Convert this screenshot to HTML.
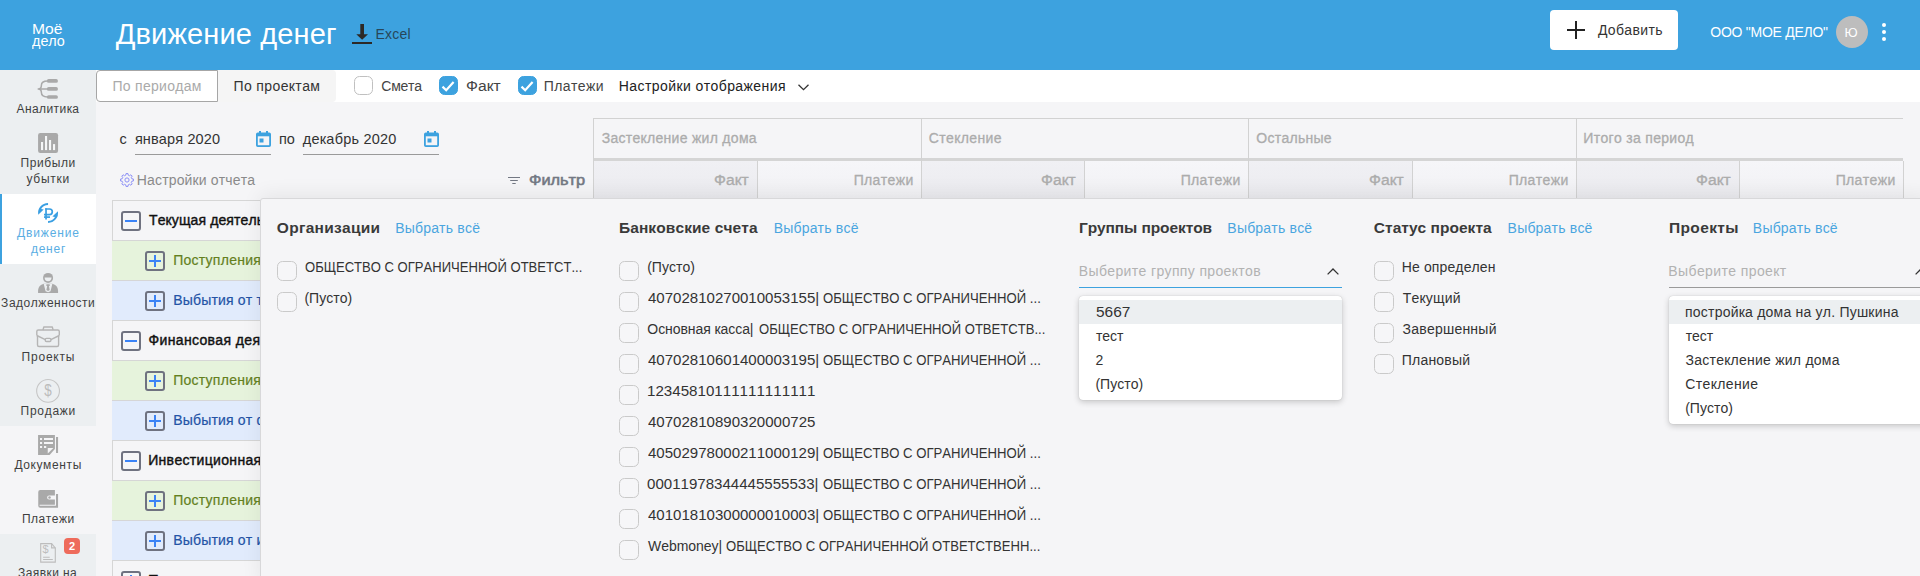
<!DOCTYPE html>
<html lang="ru">
<head>
<meta charset="utf-8">
<title>Движение денег</title>
<style>
*{box-sizing:border-box;margin:0;padding:0}
html,body{width:1920px;height:576px;overflow:hidden;background:#f5f5f7;font-family:"Liberation Sans",sans-serif;color:#212121}
body{position:relative}
.a{position:absolute}
.t{position:absolute;white-space:nowrap;line-height:1;font-kerning:none}
#hdr{left:0;top:0;width:1920px;height:70px;background:#3da2df}
#side{left:0;top:70px;width:96px;height:506px;background:#eceff1}
#bar{left:96px;top:70px;width:1824px;height:32px;background:#fff}
.cb{position:absolute;width:19px;height:19px;border:1.5px solid #c0c0c0;border-radius:5.5px;background:#fff}
.cb.on{background:#3da2df;border-color:#3da2df}
.cb2{position:absolute;width:19.6px;height:19.6px;border:1.5px solid #cacaca;border-radius:5.5px;background:#f6f6f8}
.row{position:absolute;left:112px;width:150px;height:40px;border-top:1px solid #d6d6d6}
.pm{position:absolute;width:20px;height:20px;border:2px solid #6f7280;border-radius:3px;background:transparent}
.pm:before{content:"";position:absolute;left:2px;top:7px;width:12px;height:2px;background:#3b83f6}
.pm.p:after{content:"";position:absolute;left:7px;top:2px;width:2px;height:12px;background:#3b83f6}
#panel{left:260px;top:198px;width:1670px;height:390px;background:#f5f5f7;border:1px solid #d8d8da;border-radius:3px;box-shadow:0 -3px 20px rgba(0,0,0,.07)}
.dd{position:absolute;background:#fff;border-radius:4px;box-shadow:0 2px 6px rgba(0,0,0,.2),0 0 1px rgba(0,0,0,.25)}
.hl{position:absolute;left:0;right:0;height:24px;background:#eceff1}
svg{position:absolute;overflow:visible}
</style>
</head>
<body>
<div id="hdr" class="a"></div>
<span class="t" style="left:32.42px;top:21px;font-size:14px;line-height:16px;color:#fff;transform:scaleX(1.1153);transform-origin:0 0;">Моё</span>
<span class="t" style="left:31.86px;top:32px;font-size:15px;line-height:17px;color:#fff;transform:scaleX(0.9573);transform-origin:0 0;">дело</span>
<span class="t" style="left:115.79px;top:18px;font-size:29px;line-height:32px;color:#fff;letter-spacing:0.139px;">Движение денег</span>
<svg style="left:352px;top:24px" width="20" height="20" viewBox="0 0 20 20"><path d="M8.300 0H12V10.300H16L10.150 15.800L4.300 10.300H8.300Z" fill="#2d2926"/><rect x="0" y="18" width="20" height="2" fill="#2d2926"/></svg>
<span class="t" style="left:375.55px;top:26px;font-size:14px;line-height:16px;color:#27475a;letter-spacing:0.213px;">Excel</span>
<div class="a" style="left:1550px;top:10px;width:128px;height:40px;background:#fff;border-radius:4px"></div>
<div class="a" style="left:1567px;top:29px;width:18px;height:2px;background:#222"></div><div class="a" style="left:1575px;top:21px;width:2px;height:18px;background:#222"></div>
<span class="t" style="left:1597.90px;top:22px;font-size:14px;line-height:16px;color:#333;letter-spacing:0.376px;">Добавить</span>
<span class="t" style="left:1710.34px;top:24px;font-size:14px;line-height:16px;color:#fff;letter-spacing:-0.264px;">ООО "МОЕ ДЕЛО"</span>
<div class="a" style="left:1836px;top:16px;width:32px;height:32px;border-radius:50%;background:#bdbdbd"></div>
<span class="t" style="left:1844.43px;top:25px;font-size:13px;line-height:15px;color:#fff;">Ю</span>
<div class="a" style="left:1882px;top:23px;width:4px;height:4px;border-radius:50%;background:#fff"></div>
<div class="a" style="left:1882px;top:30px;width:4px;height:4px;border-radius:50%;background:#fff"></div>
<div class="a" style="left:1882px;top:37px;width:4px;height:4px;border-radius:50%;background:#fff"></div>
<div id="side" class="a"></div>
<div class="a" style="left:0;top:194px;width:96px;height:70px;background:#fff;border-left:2px solid #3da2df"></div>
<div class="a" style="left:0;top:426px;width:96px;height:108px;background:#f5f5f7"></div>
<span class="t" style="left:16.48px;top:102px;font-size:12px;line-height:14px;color:#3f3f3f;letter-spacing:0.423px;">Аналитика</span>
<span class="t" style="left:20.53px;top:156px;font-size:12px;line-height:14px;color:#3f3f3f;letter-spacing:0.598px;">Прибыли</span>
<span class="t" style="left:26.47px;top:172px;font-size:12px;line-height:14px;color:#3f3f3f;letter-spacing:0.782px;">убытки</span>
<span class="t" style="left:16.91px;top:226px;font-size:12px;line-height:14px;color:#5aaee3;letter-spacing:0.886px;">Движение</span>
<span class="t" style="left:30.88px;top:242px;font-size:12px;line-height:14px;color:#5aaee3;letter-spacing:0.777px;">денег</span>
<span class="t" style="left:1.11px;top:296px;font-size:12px;line-height:14px;color:#3f3f3f;letter-spacing:0.524px;">Задолженности</span>
<span class="t" style="left:21.53px;top:350px;font-size:12px;line-height:14px;color:#3f3f3f;letter-spacing:0.796px;">Проекты</span>
<span class="t" style="left:20.53px;top:404px;font-size:12px;line-height:14px;color:#3f3f3f;letter-spacing:0.736px;">Продажи</span>
<span class="t" style="left:14.41px;top:458px;font-size:12px;line-height:14px;color:#3f3f3f;letter-spacing:0.648px;">Документы</span>
<span class="t" style="left:21.93px;top:512px;font-size:12px;line-height:14px;color:#3f3f3f;letter-spacing:0.517px;">Платежи</span>
<span class="t" style="left:18.11px;top:566px;font-size:12px;line-height:14px;color:#3f3f3f;letter-spacing:0.413px;">Заявки на</span>
<svg style="left:0;top:0" width="96" height="576" viewBox="0 0 96 576">
<!-- analytics -->
<g stroke="#a9a9a9" fill="none" stroke-linecap="round">
<path d="M48.7 80.900H56.100M48.700 88.900H56.100M48.700 97H56.100" stroke-width="3.700"/>
<path d="M47.500 80.900C43.300 80.900 41.400 82.600 41.400 85.200C41.400 87.600 40.200 88.900 38.200 88.900C40.200 88.900 41.400 90.200 41.400 92.600C41.400 95.200 43.300 97 47.500 97M38.200 88.900H48" stroke-width="1.500"/>
</g>
<!-- profit/loss -->
<rect x="38.060" y="133" width="20" height="20" rx="2.200" fill="#a9a9a9"/>
<g fill="#f6f7f8"><rect x="41" y="142" width="2.100" height="8.100"/><rect x="45" y="136" width="2.100" height="14.100"/><rect x="49" y="140" width="2.100" height="10.100"/><rect x="53" y="144.100" width="2.100" height="6"/></g>
<!-- money flow -->
<g fill="none" stroke="#3a9fe2">
<path d="M46.030 208.200V219.600" stroke-width="1.700"/>
<path d="M45.200 209H49.500A2.800 2.800 0 0 1 49.500 214.600H44" stroke-width="1.700"/>
<path d="M44 217.100H50" stroke-width="1.700"/>
</g>
<path d="M48.060 202.900A10 10 0 0 0 38.210 214.640L43.700 209.400L41.130 208.900A8 8 0 0 1 48.060 204.900Z" fill="#3a9fe2"/>
<path d="M48.060 222.900A10 10 0 0 0 57.910 211.160L52.420 216.400L54.990 216.900A8 8 0 0 1 48.060 220.900Z" fill="#3a9fe2"/>
<!-- debts -->
<circle cx="48.060" cy="277.900" r="5" fill="#a9a9a9"/>
<path d="M44.600 277.500A3.460 3.700 0 0 0 51.520 277.500Z" fill="#eceff1"/>
<path d="M38.060 292.900V291C38.060 286.200 41.800 283.800 45 283.800H51.100C54.300 283.800 58.060 286.200 58.060 291V292.900Z" fill="#a9a9a9"/>
<path d="M43.700 283.800H52.400L50.500 291.300L48.060 292.300L45.600 291.300Z" fill="#eceff1"/>
<path d="M46.400 284.300H49.700V285.900H48.900L49.700 289.900L48.060 291.100L46.400 289.900L47.200 285.900H46.400Z" fill="#a9a9a9"/>
<!-- projects -->
<g fill="none" stroke="#b5b5b5" stroke-width="1.400" stroke-linejoin="round">
<path d="M37.500 335.800V345a1.500 1.500 0 0 0 1.500 1.500H57.100a1.500 1.500 0 0 0 1.500-1.500V335.800"/>
<path d="M36.800 335.500V331.500a1.500 1.500 0 0 1 1.500-1.500H57.800a1.500 1.500 0 0 1 1.500 1.500V335.500"/>
<path d="M36.800 335.500L45.300 339.700M50.900 339.700L59.300 335.500"/>
<rect x="45.250" y="338.400" width="5.650" height="3.100" rx="1.200" fill="#eceff1"/>
<path d="M43 330L43.800 327H52.300L53.100 330"/>
</g>
<!-- sales -->
<circle cx="48.060" cy="390.900" r="11.400" fill="none" stroke="#c6c6c6" stroke-width="1.100"/>
<text transform="translate(48.060 396.100) scale(0.840 1.030)" font-size="16" text-anchor="middle" fill="#bcbcbc" font-family="Liberation Sans, sans-serif">$</text>
<!-- documents -->
<path d="M38.060 435H54.900V449L49.600 455H38.060Z" fill="#a9a9a9"/>
<path d="M47.750 448H53.400L47.750 453.600Z" fill="#f5f5f7"/>
<g fill="#f5f5f7"><rect x="40" y="438" width="2.100" height="2"/><rect x="40" y="442" width="2.100" height="2"/><rect x="40" y="446" width="2.100" height="2"/><rect x="44" y="438" width="9" height="2"/><rect x="44" y="442" width="9" height="2"/><rect x="44" y="446" width="2.200" height="2"/></g>
<rect x="56" y="437" width="2.060" height="16" fill="#a9a9a9"/>
<!-- payments -->
<path d="M38.250 492a2 2 0 0 1 2-2H54.900V495.400H49.100a2 2 0 0 0 0 4H54.900V504.800H39.600V505.750H56V494H58.060V507.750H40.250a2 2 0 0 1-2-2Z" fill="#a9a9a9"/>
<circle cx="49.500" cy="497.400" r="1.250" fill="#a9a9a9"/>
<!-- requests -->
<g fill="none" stroke="#bdbdbd" stroke-width="1.100">
<path d="M40.700 543.600H51.600L55.300 547.900V562.100H40.700Z"/>
<path d="M51.600 543.600V547.900H55.300"/>
<path d="M43.100 557.300H49.700M43.100 559.500H52.800"/>
</g>
<text x="45.600" y="553.200" font-size="11" text-anchor="middle" fill="#bdbdbd" font-family="Liberation Sans, sans-serif">$</text>
<rect x="64" y="538" width="16" height="16" rx="4" fill="#ee6b5b"/>
<text x="72" y="549.900" font-size="11" font-weight="bold" text-anchor="middle" fill="#fff" font-family="Liberation Sans, sans-serif">2</text>
</svg>

<div id="bar" class="a"></div>
<div class="a" style="left:218px;top:70px;width:118px;height:32px;background:#f5f5f5;border-radius:0 4px 4px 0"></div>
<div class="a" style="left:96px;top:70px;width:122px;height:32px;background:#fff;border:1px solid #a6a6a6;border-radius:4px 0 0 4px"></div>
<span class="t" style="left:112.47px;top:78px;font-size:14px;line-height:16px;color:#aaa;letter-spacing:0.282px;">По периодам</span>
<span class="t" style="left:233.47px;top:78px;font-size:14px;line-height:16px;color:#333;letter-spacing:0.386px;">По проектам</span>
<div class="cb" style="left:354.4px;top:76.2px"></div>
<span class="t" style="left:381.29px;top:78px;font-size:14px;line-height:16px;color:#444;letter-spacing:-0.256px;">Смета</span>
<div class="cb on" style="left:438.5px;top:76.2px"><svg style="left:-2px;top:-1.7px" width="20" height="20" viewBox="0 0 20 20"><path d="M4.500 10.600l3.700 3.600L15.600 5.900" fill="none" stroke="#fff" stroke-width="2.200"/></svg></div>
<span class="t" style="left:465.60px;top:78px;font-size:14px;line-height:16px;color:#444;transform:scaleX(1.1195);transform-origin:0 0;">Факт</span>
<div class="cb on" style="left:517.5px;top:76.2px"><svg style="left:-2px;top:-1.7px" width="20" height="20" viewBox="0 0 20 20"><path d="M4.500 10.600l3.700 3.600L15.600 5.900" fill="none" stroke="#fff" stroke-width="2.200"/></svg></div>
<span class="t" style="left:543.87px;top:78px;font-size:14px;line-height:16px;color:#444;letter-spacing:0.367px;">Платежи</span>
<span class="t" style="left:618.85px;top:78px;font-size:14px;line-height:16px;color:#222;letter-spacing:0.411px;">Настройки отображения</span>
<svg style="left:798px;top:83.5px" width="11" height="7" viewBox="0 0 11 7"><path d="M0.5 0.7l5 5 5-5" fill="none" stroke="#333" stroke-width="1.3"/></svg>
<span class="t" style="left:119.58px;top:131px;font-size:14.5px;line-height:16px;color:#333;">с</span>
<span class="t" style="left:134.88px;top:131px;font-size:14.5px;line-height:16px;color:#333;letter-spacing:0.136px;">января 2020</span>
<div class="a" style="left:135px;top:153.5px;width:136px;height:1px;background:#9a9a9a"></div>
<svg style="left:255.5px;top:131px" width="15" height="16" viewBox="0 0 15 16"><path d="M3 0h2v1.5h5V0h2v1.5h1.2A1.8 1.8 0 0 1 15 3.3v10.9A1.8 1.8 0 0 1 13.2 16H1.8A1.8 1.8 0 0 1 0 14.200V3.3A1.800 1.800 0 0 1 1.800 1.500H3z" fill="#3da2df"/><rect x="1.8" y="5.300" width="11.4" height="8.900" fill="#f5f5f7"/><rect x="3.5" y="7.500" width="4" height="4" fill="#3da2df"/></svg>
<span class="t" style="left:278.99px;top:131px;font-size:14.5px;line-height:16px;color:#333;">по</span>
<span class="t" style="left:302.86px;top:131px;font-size:14.5px;line-height:16px;color:#333;letter-spacing:0.209px;">декабрь 2020</span>
<div class="a" style="left:303px;top:153.5px;width:136px;height:1px;background:#9a9a9a"></div>
<svg style="left:423.5px;top:131px" width="15" height="16" viewBox="0 0 15 16"><path d="M3 0h2v1.5h5V0h2v1.5h1.2A1.8 1.8 0 0 1 15 3.3v10.9A1.8 1.8 0 0 1 13.2 16H1.8A1.8 1.8 0 0 1 0 14.200V3.3A1.800 1.800 0 0 1 1.800 1.500H3z" fill="#3da2df"/><rect x="1.8" y="5.300" width="11.4" height="8.900" fill="#f5f5f7"/><rect x="3.5" y="7.500" width="4" height="4" fill="#3da2df"/></svg>
<svg style="left:120px;top:172.800px" width="14" height="14" viewBox="0 0 14 14"><path d="M11.86 5.81L13.43 6.03L13.43 7.97L11.86 8.19L11.27 9.59L12.23 10.86L10.86 12.23L9.59 11.27L8.19 11.86L7.97 13.43L6.03 13.43L5.81 11.86L4.41 11.27L3.14 12.23L1.77 10.86L2.73 9.59L2.14 8.19L0.57 7.97L0.57 6.03L2.14 5.81L2.73 4.41L1.77 3.14L3.14 1.77L4.41 2.73L5.81 2.14L6.03 0.57L7.97 0.57L8.19 2.14L9.59 2.73L10.86 1.77L12.23 3.14L11.27 4.41Z" fill="none" stroke="#8d90f6" stroke-width="1" stroke-linejoin="round"/><circle cx="7" cy="7" r="2.100" fill="none" stroke="#8d90f6" stroke-width="1"/></svg>
<span class="t" style="left:136.85px;top:172px;font-size:14px;line-height:16px;color:#8a8a8a;letter-spacing:0.142px;">Настройки отчета</span>
<svg style="left:508px;top:176px" width="12" height="9" viewBox="0 0 12 9"><path d="M0 1.500h12M2.200 4.500h7.600M4.300 7.500h3.400" stroke="#737883" stroke-width="1.200" fill="none"/></svg>
<span class="t" style="left:529.06px;top:171px;font-size:15px;line-height:17px;color:#737883;transform:scaleX(1.0885);transform-origin:0 0;-webkit-text-stroke:0.55px #737883;">Фильтр</span>
<div class="a" style="left:593px;top:118px;width:1310px;height:1px;background:#d2d2d2"></div>
<div class="a" style="left:593px;top:158px;width:1310px;height:3px;background:#d5d5d5"></div>
<div class="a" style="left:593.10px;top:161px;width:163.75px;height:37px;background:linear-gradient(#f0f0f4,#ebebef)"></div>
<div class="a" style="left:756.85px;top:161px;width:163.75px;height:37px;background:linear-gradient(#f6f6f9,#f1f1f4)"></div>
<div class="a" style="left:920.60px;top:161px;width:163.75px;height:37px;background:linear-gradient(#f0f0f4,#ebebef)"></div>
<div class="a" style="left:1084.35px;top:161px;width:163.75px;height:37px;background:linear-gradient(#f6f6f9,#f1f1f4)"></div>
<div class="a" style="left:1248.10px;top:161px;width:163.75px;height:37px;background:linear-gradient(#f0f0f4,#ebebef)"></div>
<div class="a" style="left:1411.85px;top:161px;width:163.75px;height:37px;background:linear-gradient(#f6f6f9,#f1f1f4)"></div>
<div class="a" style="left:1575.60px;top:161px;width:163.75px;height:37px;background:linear-gradient(#f0f0f4,#ebebef)"></div>
<div class="a" style="left:1739.35px;top:161px;width:163.75px;height:37px;background:linear-gradient(#f6f6f9,#f1f1f4)"></div>
<div class="a" style="left:593px;top:118px;width:1px;height:80px;background:#d2d2d2"></div>
<div class="a" style="left:757px;top:161px;width:1px;height:37px;background:#d2d2d2"></div>
<div class="a" style="left:921px;top:118px;width:1px;height:80px;background:#d2d2d2"></div>
<div class="a" style="left:1084px;top:161px;width:1px;height:37px;background:#d2d2d2"></div>
<div class="a" style="left:1248px;top:118px;width:1px;height:80px;background:#d2d2d2"></div>
<div class="a" style="left:1412px;top:161px;width:1px;height:37px;background:#d2d2d2"></div>
<div class="a" style="left:1576px;top:118px;width:1px;height:80px;background:#d2d2d2"></div>
<div class="a" style="left:1739px;top:161px;width:1px;height:37px;background:#d2d2d2"></div>
<div class="a" style="left:1903px;top:161px;width:1px;height:37px;background:#d2d2d2"></div>
<span class="t" style="left:601.74px;top:130px;font-size:14px;line-height:16px;color:#acacac;letter-spacing:0.289px;-webkit-text-stroke:0.3px #acacac;">Застекление жил дома</span>
<span class="t" style="left:928.79px;top:130px;font-size:14px;line-height:16px;color:#acacac;letter-spacing:0.387px;-webkit-text-stroke:0.3px #acacac;">Стекление</span>
<span class="t" style="left:1256.34px;top:130px;font-size:14px;line-height:16px;color:#acacac;letter-spacing:0.268px;-webkit-text-stroke:0.3px #acacac;">Остальные</span>
<span class="t" style="left:1583.35px;top:130px;font-size:14px;line-height:16px;color:#acacac;letter-spacing:0.308px;-webkit-text-stroke:0.3px #acacac;">Итого за период</span>
<span class="t" style="left:713.90px;top:172px;font-size:14px;line-height:16px;color:#acacac;transform:scaleX(1.1195);transform-origin:0 0;-webkit-text-stroke:0.3px #acacac;">Факт</span>
<span class="t" style="left:853.67px;top:172px;font-size:14px;line-height:16px;color:#acacac;letter-spacing:0.367px;-webkit-text-stroke:0.3px #acacac;">Платежи</span>
<span class="t" style="left:1040.90px;top:172px;font-size:14px;line-height:16px;color:#acacac;transform:scaleX(1.1195);transform-origin:0 0;-webkit-text-stroke:0.3px #acacac;">Факт</span>
<span class="t" style="left:1180.67px;top:172px;font-size:14px;line-height:16px;color:#acacac;letter-spacing:0.367px;-webkit-text-stroke:0.3px #acacac;">Платежи</span>
<span class="t" style="left:1368.90px;top:172px;font-size:14px;line-height:16px;color:#acacac;transform:scaleX(1.1195);transform-origin:0 0;-webkit-text-stroke:0.3px #acacac;">Факт</span>
<span class="t" style="left:1508.67px;top:172px;font-size:14px;line-height:16px;color:#acacac;letter-spacing:0.367px;-webkit-text-stroke:0.3px #acacac;">Платежи</span>
<span class="t" style="left:1695.90px;top:172px;font-size:14px;line-height:16px;color:#acacac;transform:scaleX(1.1195);transform-origin:0 0;-webkit-text-stroke:0.3px #acacac;">Факт</span>
<span class="t" style="left:1835.67px;top:172px;font-size:14px;line-height:16px;color:#acacac;letter-spacing:0.367px;-webkit-text-stroke:0.3px #acacac;">Платежи</span>
<div class="a" style="left:112px;top:200px;width:1px;height:376px;background:#d6d6d6"></div>
<div class="row" style="top:200px;background:transparent"></div>
<div class="pm" style="left:121px;top:211.0px"></div>
<span class="t" style="left:148.99px;top:212px;font-size:14px;line-height:16px;color:#111;letter-spacing:0.115px;-webkit-text-stroke:0.4px #111;">Текущая деятельность</span>
<div class="row" style="top:240px;background:#e6f3dc"></div>
<div class="pm p" style="left:145px;top:251.0px"></div>
<span class="t" style="left:173.17px;top:252px;font-size:14px;line-height:16px;color:#64801e;letter-spacing:0.287px;-webkit-text-stroke:0.2px;">Поступления от текущей деятельности</span>
<div class="row" style="top:280px;background:#e1ebfc"></div>
<div class="pm p" style="left:145px;top:291.0px"></div>
<span class="t" style="left:173.15px;top:292px;font-size:14px;line-height:16px;color:#2453a6;letter-spacing:0.189px;-webkit-text-stroke:0.2px;">Выбытия от текущей деятельности</span>
<div class="row" style="top:320px;background:transparent"></div>
<div class="pm" style="left:121px;top:331.0px"></div>
<span class="t" style="left:148.49px;top:332px;font-size:14px;line-height:16px;color:#111;letter-spacing:0.365px;-webkit-text-stroke:0.4px #111;">Финансовая деятельность</span>
<div class="row" style="top:360px;background:#e6f3dc"></div>
<div class="pm p" style="left:145px;top:371.0px"></div>
<span class="t" style="left:173.17px;top:372px;font-size:14px;line-height:16px;color:#64801e;letter-spacing:0.287px;-webkit-text-stroke:0.2px;">Поступления от финансовой деятельности</span>
<div class="row" style="top:400px;background:#e1ebfc"></div>
<div class="pm p" style="left:145px;top:411.0px"></div>
<span class="t" style="left:173.15px;top:412px;font-size:14px;line-height:16px;color:#2453a6;letter-spacing:0.189px;-webkit-text-stroke:0.2px;">Выбытия от финансовой деятельности</span>
<div class="row" style="top:440px;background:transparent"></div>
<div class="pm" style="left:121px;top:451.0px"></div>
<span class="t" style="left:148.15px;top:452px;font-size:14px;line-height:16px;color:#111;letter-spacing:0.335px;-webkit-text-stroke:0.4px #111;">Инвестиционная деятельность</span>
<div class="row" style="top:480px;background:#e6f3dc"></div>
<div class="pm p" style="left:145px;top:491.0px"></div>
<span class="t" style="left:173.17px;top:492px;font-size:14px;line-height:16px;color:#64801e;letter-spacing:0.287px;-webkit-text-stroke:0.2px;">Поступления от инвестиционной деятельности</span>
<div class="row" style="top:520px;background:#e1ebfc"></div>
<div class="pm p" style="left:145px;top:531.0px"></div>
<span class="t" style="left:173.15px;top:532px;font-size:14px;line-height:16px;color:#2453a6;letter-spacing:0.189px;-webkit-text-stroke:0.2px;">Выбытия от инвестиционной деятельности</span>
<div class="row" style="top:560px;background:transparent"></div>
<div class="pm p" style="left:121px;top:571.0px"></div>
<span class="t" style="left:148.09px;top:572px;font-size:14px;line-height:16px;color:#111;transform:scaleX(1.0693);transform-origin:0 0;-webkit-text-stroke:0.4px #111;">Прочее</span>
<div id="panel" class="a"></div>
<span class="t" style="left:276.86px;top:219px;font-size:15.5px;line-height:17px;color:#3a3a3a;font-weight:bold;letter-spacing:0.280px;">Организации</span>
<span class="t" style="left:395.15px;top:220px;font-size:14px;line-height:16px;color:#4aa5df;letter-spacing:0.196px;">Выбрать всё</span>
<span class="t" style="left:618.96px;top:219px;font-size:15.5px;line-height:17px;color:#3a3a3a;font-weight:bold;letter-spacing:0.098px;">Банковские счета</span>
<span class="t" style="left:773.65px;top:220px;font-size:14px;line-height:16px;color:#4aa5df;letter-spacing:0.196px;">Выбрать всё</span>
<span class="t" style="left:1078.96px;top:219px;font-size:15.5px;line-height:17px;color:#3a3a3a;font-weight:bold;letter-spacing:-0.091px;">Группы проектов</span>
<span class="t" style="left:1227.35px;top:220px;font-size:14px;line-height:16px;color:#4aa5df;letter-spacing:0.196px;">Выбрать всё</span>
<span class="t" style="left:1373.86px;top:219px;font-size:15.5px;line-height:17px;color:#3a3a3a;font-weight:bold;letter-spacing:0.027px;">Статус проекта</span>
<span class="t" style="left:1507.60px;top:220px;font-size:14px;line-height:16px;color:#4aa5df;letter-spacing:0.196px;">Выбрать всё</span>
<span class="t" style="left:1668.96px;top:219px;font-size:15.5px;line-height:17px;color:#3a3a3a;font-weight:bold;letter-spacing:0.387px;">Проекты</span>
<span class="t" style="left:1752.85px;top:220px;font-size:14px;line-height:16px;color:#4aa5df;letter-spacing:0.196px;">Выбрать всё</span>
<div class="cb2" style="left:277.3px;top:261.0px"></div>
<span class="t" style="left:304.68px;top:259px;font-size:14px;line-height:16px;color:#333;transform:scaleX(0.9325);transform-origin:0 0;">ОБЩЕСТВО С ОГРАНИЧЕННОЙ ОТВЕТСТ...</span>
<div class="cb2" style="left:277.3px;top:292.0px"></div>
<span class="t" style="left:304.43px;top:290px;font-size:14px;line-height:16px;color:#333;letter-spacing:0.024px;">(Пусто)</span>
<div class="cb2" style="left:619.3px;top:261.0px"></div>
<span class="t" style="left:647.13px;top:259px;font-size:14px;line-height:16px;color:#333;letter-spacing:0.024px;">(Пусто)</span>
<div class="cb2" style="left:619.3px;top:292.0px"></div>
<div><span class="t" style="left:647.65px;top:290px;font-size:14px;line-height:16px;color:#333;transform:scaleX(1.0742);transform-origin:0 0;">40702810270010053155|</span> <span class="t" style="left:822.63px;top:290px;font-size:14px;line-height:16px;color:#333;transform:scaleX(0.9387);transform-origin:0 0;">ОБЩЕСТВО С ОГРАНИЧЕННОЙ ...</span></div>
<div class="cb2" style="left:619.3px;top:323.0px"></div>
<div><span class="t" style="left:647.34px;top:321px;font-size:14px;line-height:16px;color:#333;letter-spacing:-0.072px;">Основная касса|</span> <span class="t" style="left:758.63px;top:321px;font-size:14px;line-height:16px;color:#333;transform:scaleX(0.9335);transform-origin:0 0;">ОБЩЕСТВО С ОГРАНИЧЕННОЙ ОТВЕТСТВ...</span></div>
<div class="cb2" style="left:619.3px;top:354.0px"></div>
<div><span class="t" style="left:647.65px;top:352px;font-size:14px;line-height:16px;color:#333;transform:scaleX(1.0742);transform-origin:0 0;">40702810601400003195|</span> <span class="t" style="left:822.63px;top:352px;font-size:14px;line-height:16px;color:#333;transform:scaleX(0.9387);transform-origin:0 0;">ОБЩЕСТВО С ОГРАНИЧЕННОЙ ...</span></div>
<div class="cb2" style="left:619.3px;top:385.0px"></div>
<span class="t" style="left:646.85px;top:383px;font-size:14px;line-height:16px;color:#333;transform:scaleX(1.0813);transform-origin:0 0;">12345810111111111111</span>
<div class="cb2" style="left:619.3px;top:416.0px"></div>
<span class="t" style="left:647.65px;top:414px;font-size:14px;line-height:16px;color:#333;transform:scaleX(1.0754);transform-origin:0 0;">40702810890320000725</span>
<div class="cb2" style="left:619.3px;top:447.0px"></div>
<div><span class="t" style="left:647.65px;top:445px;font-size:14px;line-height:16px;color:#333;transform:scaleX(1.0742);transform-origin:0 0;">40502978000211000129|</span> <span class="t" style="left:822.63px;top:445px;font-size:14px;line-height:16px;color:#333;transform:scaleX(0.9387);transform-origin:0 0;">ОБЩЕСТВО С ОГРАНИЧЕННОЙ ...</span></div>
<div class="cb2" style="left:619.3px;top:478.0px"></div>
<div><span class="t" style="left:647.41px;top:476px;font-size:14px;line-height:16px;color:#333;transform:scaleX(1.0758);transform-origin:0 0;">00011978344445555533|</span> <span class="t" style="left:822.63px;top:476px;font-size:14px;line-height:16px;color:#333;transform:scaleX(0.9387);transform-origin:0 0;">ОБЩЕСТВО С ОГРАНИЧЕННОЙ ...</span></div>
<div class="cb2" style="left:619.3px;top:509.0px"></div>
<div><span class="t" style="left:647.65px;top:507px;font-size:14px;line-height:16px;color:#333;transform:scaleX(1.0742);transform-origin:0 0;">40101810300000010003|</span> <span class="t" style="left:822.63px;top:507px;font-size:14px;line-height:16px;color:#333;transform:scaleX(0.9387);transform-origin:0 0;">ОБЩЕСТВО С ОГРАНИЧЕННОЙ ...</span></div>
<div class="cb2" style="left:619.3px;top:540.0px"></div>
<div><span class="t" style="left:647.94px;top:538px;font-size:14px;line-height:16px;color:#333;letter-spacing:-0.018px;">Webmoney|</span> <span class="t" style="left:725.63px;top:538px;font-size:14px;line-height:16px;color:#333;transform:scaleX(0.9347);transform-origin:0 0;">ОБЩЕСТВО С ОГРАНИЧЕННОЙ ОТВЕТСТВЕНН...</span></div>
<div class="cb2" style="left:1374.1px;top:261.0px"></div>
<span class="t" style="left:1401.85px;top:259px;font-size:14px;line-height:16px;color:#333;letter-spacing:0.113px;">Не определен</span>
<div class="cb2" style="left:1374.1px;top:292.0px"></div>
<span class="t" style="left:1402.69px;top:290px;font-size:14px;line-height:16px;color:#333;letter-spacing:0.193px;">Текущий</span>
<div class="cb2" style="left:1374.1px;top:323.0px"></div>
<span class="t" style="left:1402.54px;top:321px;font-size:14px;line-height:16px;color:#333;letter-spacing:0.230px;">Завершенный</span>
<div class="cb2" style="left:1374.1px;top:354.0px"></div>
<span class="t" style="left:1401.87px;top:352px;font-size:14px;line-height:16px;color:#333;letter-spacing:0.178px;">Плановый</span>
<span class="t" style="left:1078.85px;top:263px;font-size:14px;line-height:16px;color:#b2b2b2;letter-spacing:0.357px;">Выберите группу проектов</span>
<svg style="left:1326.5px;top:268px" width="12" height="7" viewBox="0 0 12 7"><path d="M0.600 6.400l5.400-5.400 5.400 5.400" fill="none" stroke="#333" stroke-width="1.300"/></svg>
<div class="a" style="left:1079px;top:286.5px;width:263px;height:1.5px;background:#3da2df"></div>
<div class="dd" style="left:1079px;top:296px;width:263px;height:104px"><div class="hl" style="top:4px"></div></div>
<span class="t" style="left:1095.63px;top:304px;font-size:14px;line-height:16px;color:#333;transform:scaleX(1.1040);transform-origin:0 0;">5667</span>
<span class="t" style="left:1096.01px;top:328px;font-size:14px;line-height:16px;color:#333;letter-spacing:-0.049px;">тест</span>
<span class="t" style="left:1095.55px;top:352px;font-size:14px;line-height:16px;color:#333;">2</span>
<span class="t" style="left:1095.38px;top:376px;font-size:14px;line-height:16px;color:#333;letter-spacing:0.024px;">(Пусто)</span>
<span class="t" style="left:1668.35px;top:263px;font-size:14px;line-height:16px;color:#b2b2b2;letter-spacing:0.393px;">Выберите проект</span>
<svg style="left:1915px;top:268px" width="12" height="7" viewBox="0 0 12 7"><path d="M0.600 6.400l5.400-5.400 5.400 5.400" fill="none" stroke="#333" stroke-width="1.300"/></svg>
<div class="a" style="left:1669px;top:286.5px;width:263px;height:1px;background:#9a9a9a"></div>
<div class="dd" style="left:1669px;top:296px;width:263px;height:128px"><div class="hl" style="top:4px"></div></div>
<span class="t" style="left:1685.03px;top:304px;font-size:14px;line-height:16px;color:#333;letter-spacing:0.219px;">постройка дома на ул. Пушкина</span>
<span class="t" style="left:1685.76px;top:328px;font-size:14px;line-height:16px;color:#333;letter-spacing:-0.049px;">тест</span>
<span class="t" style="left:1685.54px;top:352px;font-size:14px;line-height:16px;color:#333;letter-spacing:0.242px;">Застекление жил дома</span>
<span class="t" style="left:1685.29px;top:376px;font-size:14px;line-height:16px;color:#333;letter-spacing:0.387px;">Стекление</span>
<span class="t" style="left:1685.13px;top:400px;font-size:14px;line-height:16px;color:#333;letter-spacing:0.024px;">(Пусто)</span>
</body>
</html>
